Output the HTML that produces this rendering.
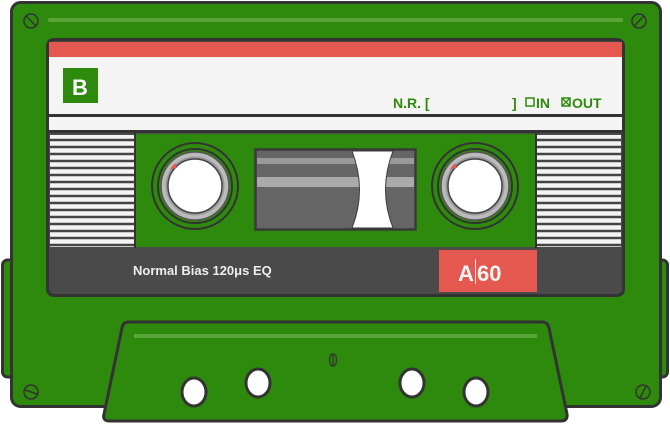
<!DOCTYPE html>
<html><head><style>
html,body{margin:0;padding:0;background:#fff;width:670px;height:424px;overflow:hidden}
text{font-family:"Liberation Sans",sans-serif;font-weight:bold}
</style></head><body>
<svg width="670" height="424" viewBox="0 0 670 424" xmlns="http://www.w3.org/2000/svg">
<g stroke="#333" stroke-width="3">
<rect x="2.5" y="260" width="14" height="117" rx="5" fill="#2e8a0c"/>
<rect x="653.5" y="260" width="14" height="117" rx="5" fill="#2e8a0c"/>
<rect x="11.5" y="2.5" width="649" height="404" rx="9" fill="#2e8a0c"/>
</g>
<line x1="50" y1="20" x2="621" y2="20" stroke="#5aa53a" stroke-width="4" stroke-linecap="round"/>
<g fill="none" stroke="#333" stroke-width="1.5">
<circle cx="31" cy="21" r="7"/><line x1="26" y1="16" x2="36" y2="26"/>
<circle cx="639" cy="21" r="7"/><line x1="644" y1="16" x2="634" y2="26"/>
<circle cx="31" cy="392" r="7"/><line x1="25" y1="390" x2="37" y2="394"/>
<circle cx="643" cy="392" r="7"/><line x1="646" y1="386" x2="640" y2="398"/>
</g>
<rect x="47.5" y="39.5" width="576" height="256" rx="6" fill="#4a4a4a" stroke="#333" stroke-width="3"/>
<rect x="49" y="42" width="573" height="15" fill="#e5584f"/>
<rect x="49" y="57" width="573" height="57" fill="#f4f4f4"/>
<rect x="49" y="114" width="573" height="3" fill="#333"/>
<rect x="49" y="117" width="573" height="13" fill="#f4f4f4"/>
<rect x="49" y="130" width="573" height="3" fill="#333"/>
<rect x="63" y="68" width="35" height="35" fill="#2e8a0c"/>
<text x="72" y="95" font-size="22" fill="#fff">B</text>
<text x="393" y="108" font-size="14" fill="#2e8a0c">N.R. [</text>
<text x="512" y="108" font-size="14" fill="#2e8a0c">] </text>
<rect x="526" y="98" width="8" height="8" fill="none" stroke="#2e8a0c" stroke-width="1.5"/>
<text x="536" y="108" font-size="14" fill="#2e8a0c">IN</text>
<rect x="562" y="98" width="8" height="8" fill="none" stroke="#2e8a0c" stroke-width="1.5"/>
<path d="M562 98l8 8M570 98l-8 8" stroke="#2e8a0c" stroke-width="1.3"/>
<text x="572" y="108" font-size="14" fill="#2e8a0c">OUT</text>
<g fill="#f4f4f4">
<rect x="50" y="135" width="84" height="112"/>
<rect x="537" y="135" width="84" height="112"/>
</g>
<g stroke="#444" stroke-width="2.5">
<path d="M50 140H134M50 147H134M50 154H134M50 161H134M50 168H134M50 175H134M50 182H134M50 189H134M50 196H134M50 203H134M50 210H134M50 217H134M50 224H134M50 231H134M50 238H134M50 245H134"/>
<path d="M537 140H621M537 147H621M537 154H621M537 161H621M537 168H621M537 175H621M537 182H621M537 189H621M537 196H621M537 203H621M537 210H621M537 217H621M537 224H621M537 231H621M537 238H621M537 245H621"/>
</g>
<rect x="136" y="134" width="399" height="113" fill="#2e8a0c"/>
<rect x="134" y="133" width="2" height="115" fill="#333"/>
<rect x="535" y="133" width="2" height="115" fill="#333"/>
<rect x="255.5" y="149.5" width="160" height="80" fill="#666" stroke="#3a3a3a" stroke-width="2.5"/>
<rect x="257" y="158" width="157" height="6" fill="#999"/>
<rect x="257" y="177" width="157" height="10" fill="#aaa"/>
<path d="M352 151 H393 Q378 190 393 228 H352 Q367 190 352 151Z" fill="#fff" stroke="#3a3a3a" stroke-width="1"/>
<g id="r">
<circle cx="195" cy="186" r="43" fill="#2e8a0c" stroke="#333" stroke-width="2"/>
<circle cx="195" cy="186" r="37" fill="#2e8a0c" stroke="#333" stroke-width="2"/>
<circle cx="195" cy="186" r="34" fill="#bbb" stroke="#555" stroke-width="1.5"/>
<circle cx="195" cy="186" r="29.5" fill="#999"/>
<circle cx="195" cy="186" r="27" fill="#fff" stroke="#444" stroke-width="1.5"/>
<path d="M170 169 l5 -6 l2 5z" fill="#e5584f"/>
</g>
<use href="#r" x="280"/>
<rect x="439" y="250" width="98" height="42" fill="#e5584f"/>
<text x="133" y="275" font-size="13" fill="#eee">Normal Bias 120μs EQ</text>
<text x="458" y="281" font-size="22" fill="#f4f4f4">A</text>
<rect x="475" y="259" width="1" height="25" fill="#f4f4f4"/>
<text x="477" y="281" font-size="22" fill="#f4f4f4">60</text>
<path d="M129 322 H542 Q548 322 549 328 L567 414 Q568 421 561 421 H110 Q102 421 104 414 L122 328 Q123 322 129 322Z" fill="#2e8a0c" stroke="#333" stroke-width="3"/>
<line x1="134" y1="336" x2="537" y2="336" stroke="#5aa53a" stroke-width="4"/>
<ellipse cx="333" cy="360" rx="3.5" ry="6" fill="none" stroke="#333" stroke-width="1.3"/>
<line x1="333" y1="354" x2="333" y2="366" stroke="#333" stroke-width="1.3"/>
<g fill="#fff" stroke="#333" stroke-width="3">
<ellipse cx="194" cy="392" rx="12" ry="14"/>
<ellipse cx="258" cy="383" rx="12" ry="14"/>
<ellipse cx="412" cy="383" rx="12" ry="14"/>
<ellipse cx="476" cy="392" rx="12" ry="14"/>
</g>
</svg>
</body></html>
